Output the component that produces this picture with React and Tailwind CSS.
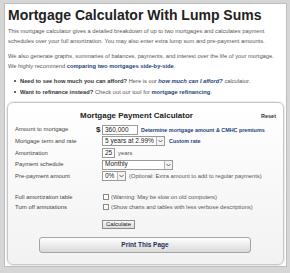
function Arrow() {
  return (
    <span className="ml-auto flex h-full w-[8px] items-center justify-center border-l border-[#b5b5b5] bg-[#f3f3f3]">
      <svg width="5" height="4" viewBox="0 0 5 4">
        <path d="M0.5 1 L2.5 3 L4.5 1" fill="none" stroke="#555" strokeWidth="0.9" />
      </svg>
    </span>
  );
}

function Select({ w, value }) {
  return (
    <div className={`flex h-[10px] items-center border border-[#9a9a9a] bg-white ${w}`}>
      <span className="pl-[2px] text-[6.5px] leading-none text-[#222]">{value}</span>
      <Arrow />
    </div>
  );
}

function Row({ label, children }) {
  return (
    <div className="flex h-[11.6px] items-center">
      <div className="w-[81px] text-[5.9px] text-[#444]">{label}</div>
      <div className="w-[6px]"></div>
      <div className="flex items-center gap-[3px]">{children}</div>
    </div>
  );
}

function Check({ label, note }) {
  return (
    <div className="flex h-[10px] items-center">
      <div className="w-[88px] text-[5.9px] text-[#444]">{label}</div>
      <span className="h-[6px] w-[6px] border border-[#888] bg-white"></span>
      <span className="ml-[2px] whitespace-nowrap text-[5.75px] text-[#555]">{note}</span>
    </div>
  );
}

export default function App() {
  return (
    <div className="h-[273px] w-[290px] overflow-hidden bg-[#d6d6d6] pl-[4px] pt-[3px] font-['Liberation_Sans',Arial,sans-serif]">
      <div className="h-[264px] w-[283px] border border-[#bdbdbd] bg-white px-[2px] pt-[2px]">
        <h1 className="pl-[1px] text-[14px] font-bold leading-[18px] text-[#222]">
          Mortgage Calculator With Lump Sums
        </h1>
        <div className="whitespace-nowrap pl-[1px] text-[5.75px] leading-[10px] text-[#555]">
          <p className="mt-[2px]">
            This mortgage calculator gives a detailed breakdown of up to two mortgages and calculates payment
            <br />
            schedules over your full amortization. You may also enter extra lump sum and pre-payment amounts.
          </p>
          <p className="mt-[5px]">
            We also generate graphs, summaries of balances, payments, and interest over the life of your mortgage.
            <br />
            We highly recommend{" "}
            <span className="font-bold text-[#1f3f7a]">comparing two mortgages side-by-side</span>.
          </p>
          <ul className="mt-[5px] pl-[6px]">
            <li className="flex items-center gap-[4px]">
              <span className="h-[2px] w-[2px] rounded-full bg-[#333]"></span>
              <span>
                <b className="text-[#333]">Need to see how much you can afford?</b> Here is our{" "}
                <b className="italic text-[#1f3f7a]">how much can I afford?</b> calculator.
              </span>
            </li>
            <li className="mt-[1px] flex items-center gap-[4px]">
              <span className="h-[2px] w-[2px] rounded-full bg-[#333]"></span>
              <span>
                <b className="text-[#333]">Want to refinance instead?</b> Check out our tool for{" "}
                <b className="text-[#1f3f7a]">mortgage refinancing</b>.
              </span>
            </li>
          </ul>
        </div>

        <div className="mt-[5px] h-[163px] w-[277px] rounded-[6px] border border-[#c8c8c8] bg-gradient-to-b from-white to-[#f2f2f2] px-[7px] pt-[7px] shadow-[0_0_0_1px_#ececec]">
          <div className="relative h-[12px] pr-[18px] text-center text-[8px] font-bold leading-[12px] text-[#222]">
            Mortgage Payment Calculator
            <span className="absolute right-[0px] top-0 text-[5.5px] font-bold text-[#333]">Reset</span>
          </div>

          <div className="mt-[2px]">
            <div className="flex h-[11.6px] items-center">
              <div className="w-[81px] text-[5.9px] text-[#444]">Amount to mortgage</div>
              <div className="w-[6px] text-[8px] font-bold leading-none text-[#222]">$</div>
              <div className="flex h-[10px] w-[36px] items-center border border-[#9a9a9a] bg-white pl-[2px] text-[6.5px] text-[#222]">
                360,000
              </div>
              <span className="ml-[3px] text-[5.4px] font-bold text-[#1f3f7a]">
                Determine mortgage amount &amp; CMHC premiums
              </span>
            </div>
            <Row label="Mortgage term and rate">
              <Select w="w-[63px]" value="5 years at 2.99%" />
              <span className="ml-[1px] text-[5.4px] font-bold text-[#1f3f7a]">Custom rate</span>
            </Row>
            <Row label="Amortization">
              <div className="flex h-[10px] w-[13px] items-center border border-[#9a9a9a] bg-white pl-[2px] text-[6.5px] text-[#222]">
                25
              </div>
              <span className="text-[5.9px] text-[#555]">years</span>
            </Row>
            <Row label="Payment schedule">
              <Select w="w-[71px]" value="Monthly" />
            </Row>
            <Row label="Pre-payment amount">
              <Select w="w-[24px]" value="0%" />
              <span className="whitespace-nowrap text-[5.75px] text-[#555]">
                (Optional: Extra amount to add to regular payments)
              </span>
            </Row>
          </div>

          <div className="mt-[10px]">
            <Check label="Full amortization table" note="(Warning: May be slow on old computers)" />
            <Check
              label="Turn off annotations"
              note="(Show charts and tables with less verbose descriptions)"
            />
          </div>

          <div className="mt-[8px] pl-[87px]">
            <button className="flex h-[9px] w-[33px] items-center justify-center border border-[#8a8a8a] bg-gradient-to-b from-[#fafafa] to-[#dcdcdc] text-[6px] leading-none text-[#222]">
              Calculate
            </button>
          </div>

          <div className="mt-[8px] pl-[24px]">
            <button className="flex h-[16px] w-[212px] items-center justify-center rounded-[3px] border border-[#a5a5a5] bg-gradient-to-b from-white to-[#d9d9d9] text-[6.5px] font-bold text-[#1f2f55]">
              Print This Page
            </button>
          </div>
        </div>
      </div>
    </div>
  );
}
